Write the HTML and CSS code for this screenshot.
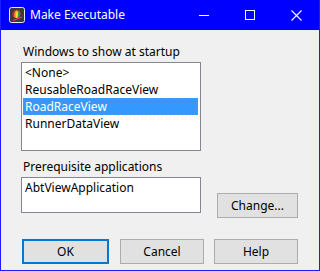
FILE: index.html
```html
<!DOCTYPE html>
<html>
<head>
<meta charset="utf-8">
<link rel="stylesheet" href="styles.css">
</head>
<body>
<div class="window">
  <div class="titlebar">
    <svg class="app-icon" width="16" height="16" viewBox="0 0 16 16">
      <rect x="0.5" y="0.5" width="15" height="15" rx="2" fill="#3a3a3a" stroke="#e8e8e8"/>
      <path d="M4 10 C3 7 3.5 3.5 7.5 3 C11 3 12.5 5.5 11 9 L8.5 11.5 Z" fill="#d12a2a"/>
      <path d="M5.5 10.5 C5 7 5.5 4 7.5 3.2 L8 11 Z" fill="#f0a020"/>
      <path d="M7 11 C6.8 7 7 4 8 3.2 C9 4 9.3 7 9 10.5 Z" fill="#f5e030"/>
      <path d="M8.6 10.8 C9 7 9.2 4.5 8.6 3.2 C10 3.8 10.6 6 10.2 9.5 Z" fill="#3aa040"/>
      <path d="M10 10 C10.6 7 10.6 5 9.6 3.5 C11.5 4.5 11.8 7 10.8 9.3 Z" fill="#3070d0"/>
      <path d="M4 13.5 L13 10" stroke="#ff3070" stroke-width="1.3"/>
    </svg>
    <span class="title">Make Executable</span>
    <div class="controls">
      <div class="ctl"><svg width="10" height="10" viewBox="0 0 10 10"><path d="M0 5.5 H10" stroke="#fff" stroke-width="1"/></svg></div>
      <div class="ctl"><svg width="10" height="10" viewBox="0 0 10 10"><rect x="0.5" y="0.5" width="9" height="9" fill="none" stroke="#fff" stroke-width="1"/></svg></div>
      <div class="ctl"><svg width="11" height="11" viewBox="0 0 11 11"><path d="M0.5 0.5 L10.5 10.5 M10.5 0.5 L0.5 10.5" stroke="#fff" stroke-width="1.1"/></svg></div>
    </div>
  </div>
  <div class="content">
    <div class="label">Windows to show at startup</div>
    <div class="listbox">
      <div class="item">&lt;None&gt;</div>
      <div class="item">ReusableRoadRaceView</div>
      <div class="item selected">RoadRaceView</div>
      <div class="item">RunnerDataView</div>
    </div>
    <div class="prereq-row">
      <div class="prereq">
        <div class="label">Prerequisite applications</div>
        <div class="textbox">AbtViewApplication</div>
      </div>
      <button class="btn btn-change">Change...</button>
    </div>
    <div class="button-row">
      <button class="btn btn-ok">OK</button>
      <button class="btn btn-cancel">Cancel</button>
      <button class="btn btn-help">Help</button>
    </div>
  </div>
</div>
</body>
</html>
```

FILE: styles.css
```css
html, body {
  margin: 0;
  padding: 0;
  background: #f0f0f0;
}
body {
  font-family: "Noto Sans", "Open Sans", sans-serif;
  font-size: 12px;
  color: #000;
}
.window {
  box-sizing: border-box;
  width: 320px;
  height: 271px;
  border: 1px solid #1c1cff;
  border-top: none;
  background: #f0f0f0;
}
.titlebar {
  height: 30px;
  background: #0000ff;
  display: flex;
  align-items: center;
  color: #fff;
}
.app-icon {
  margin-left: 8px;
  flex: none;
}
.title {
  margin-left: 5px;
  font-size: 12px;
  line-height: 16px;
}
.controls {
  margin-left: auto;
  display: flex;
  height: 30px;
}
.ctl {
  width: 46px;
  height: 30px;
  display: flex;
  align-items: center;
  justify-content: center;
}
.content {
  padding: 14px 0 0 20px;
}
.label {
  line-height: 16px;
  padding-left: 2px;
  white-space: nowrap;
}
.listbox {
  box-sizing: border-box;
  margin-top: 2px;
  width: 180px;
  height: 89px;
  border: 1px solid #828790;
  background: #fff;
  padding: 1px;
  overflow: hidden;
}
.item {
  height: 17px;
  line-height: 17px;
  padding-left: 2px;
  white-space: nowrap;
  box-sizing: border-box;
}
.item.selected {
  background: #3399ff;
  color: #fff;
  border: 1px dotted #e07818;
  line-height: 15px;
  padding-left: 1px;
  margin-right: 1px;
}
.prereq-row {
  display: flex;
  align-items: flex-start;
  margin-top: 8px;
}
.prereq {
  width: 180px;
}
.textbox {
  box-sizing: border-box;
  margin-top: 2px;
  height: 36px;
  border: 1px solid #828790;
  background: #fff;
  padding: 1px 3px;
  line-height: 17px;
}
.btn {
  box-sizing: border-box;
  height: 25px;
  border: 1px solid #adadad;
  background: #e1e1e1;
  font-family: inherit;
  font-size: 12px;
  color: #000;
  padding: 0;
  margin: 0;
}
.btn-change {
  width: 81px;
  margin-left: 16px;
  margin-top: 34px;
}
.button-row {
  display: flex;
  margin-top: 21px;
}
.btn-ok {
  width: 87px;
  margin-left: 1px;
  border: 2px solid #0078d7;
}
.btn-cancel {
  width: 84px;
  margin-left: 11px;
}
.btn-help {
  width: 84px;
  margin-left: 10px;
}
```
